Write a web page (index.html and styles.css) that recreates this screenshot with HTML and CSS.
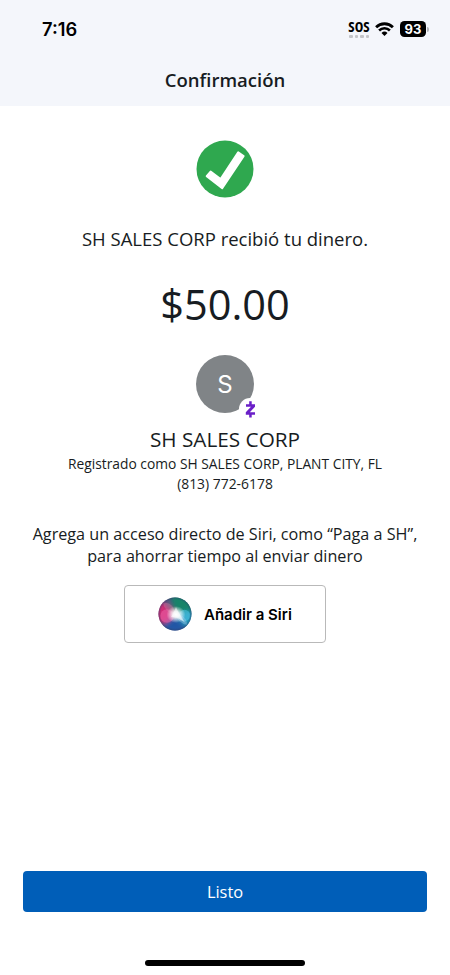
FILE: index.html
```html
<!DOCTYPE html>
<html lang="es">
<head>
<meta charset="utf-8">
<meta name="viewport" content="width=device-width, initial-scale=1">
<title>Confirmación</title>
<link rel="stylesheet" href="styles.css">
</head>
<body>
<div class="screen">
  <header class="header">
    <div class="status">
      <span class="time">7:16</span>
      <div class="indicators">
        <div class="sos"><span class="sos-text">SOS</span><span class="dots"><i></i><i></i><i></i><i></i></span></div>
        <svg class="wifi" viewBox="0 0 19 14" width="19" height="14">
          <path d="M1.1 5.2a12 12 0 0 1 16.8 0" fill="none" stroke="#000" stroke-width="2.8"/>
          <path d="M4.1 8.5a7.7 7.7 0 0 1 10.8 0" fill="none" stroke="#000" stroke-width="2.6"/>
          <path d="M6.5 11a4.3 4.3 0 0 1 6 0L9.5 14z"/>
        </svg>
        <div class="battery"><span class="level">93</span><span class="cap"></span></div>
      </div>
    </div>
    <h1 class="title">Confirmación</h1>
  </header>
  <main class="content">
    <svg class="check" viewBox="0 0 58 58" width="58" height="58">
      <circle cx="29" cy="29" r="28.5" fill="#2fa84f"/>
      <path d="M10.7 36.2L14.6 31.6L24.6 39L42.2 12.4L47.6 16.1L26.2 48.1z" fill="#fff" stroke="#fff" stroke-width="2" stroke-linejoin="round"/>
    </svg>
    <p class="message">SH SALES CORP recibió tu dinero.</p>
    <p class="amount">$50.00</p>
    <div class="avatar">
      <span class="initial">S</span>
      <span class="badge">
        <svg viewBox="0 0 20 20" width="20" height="20">
          <path d="M6 5.2H15V7.8L9.8 13.2H15V15.8H5.8V13.2L11 7.8H6zM9.2 2.2h2.5v3.2H9.2zM9.2 15.4h2.5v3.2H9.2z" fill="#6a1fc8"/>
        </svg>
      </span>
    </div>
    <h2 class="name">SH SALES CORP</h2>
    <p class="detail registered">Registrado como SH SALES CORP, PLANT CITY, FL</p>
    <p class="detail phone">(813) 772-6178</p>
    <p class="hint">Agrega un acceso directo de Siri, como “Paga a SH”,<br>para ahorrar tiempo al enviar dinero</p>
    <button class="siri">
      <svg class="orb" viewBox="0 0 34 34" width="34" height="34">
        <defs>
          <clipPath id="disc"><circle cx="17" cy="17" r="16.5"/></clipPath>
          <filter id="soft" x="-50%" y="-50%" width="200%" height="200%"><feGaussianBlur stdDeviation="2.6"/></filter>
          <radialGradient id="glow"><stop offset="0" stop-color="#fff"/><stop offset=".35" stop-color="#fff" stop-opacity=".85"/><stop offset="1" stop-color="#fff" stop-opacity="0"/></radialGradient>
          <radialGradient id="rim"><stop offset=".86" stop-color="#26406b" stop-opacity="0"/><stop offset="1" stop-color="#26406b" stop-opacity=".45"/></radialGradient>
        </defs>
        <g clip-path="url(#disc)">
          <rect width="34" height="34" fill="#50547f"/>
          <g filter="url(#soft)">
            <path d="M17 17L-2 -2V28L9 25z" fill="#d02c75"/>
            <path d="M17 17L12 -3H36V17z" fill="#128469"/>
            <path d="M17 17L36 13V31L26 30z" fill="#2499b8"/>
            <path d="M17 17L29 32L17 37L3 31z" fill="#2357a5"/>
          </g>
          <circle cx="9" cy="19" r="6.8" fill="#ed6aae" opacity=".5"/>
          <circle cx="26.5" cy="18.5" r="5.7" fill="#54c9ed" opacity=".5"/>
          <path d="M5 6Q15 4 17 17Q7 16 5 6z" fill="#d985a6" opacity=".35"/>
          <path d="M17 17Q29 18 29 28Q20 26 17 17z" fill="#bbcff3" opacity=".35"/>
          <ellipse cx="18" cy="17.5" rx="9.5" ry="8.5" fill="url(#glow)"/>
          <path d="M15 17L18 10L20.5 15.5L27 25.5L19 20.5L13 20z" fill="#fff" opacity=".5"/>
          <circle cx="17" cy="17" r="16.5" fill="url(#rim)"/>
        </g>
      </svg>
      <span class="siri-label">Añadir a Siri</span>
    </button>
  </main>
  <footer class="footer">
    <button class="done">Listo</button>
    <div class="home"></div>
  </footer>
</div>
</body>
</html>
```

FILE: styles.css
```css
* { box-sizing: border-box; }
body { margin: 0; background: #fff; color: #171c22; font-family: "Open Sans", sans-serif; }
h1, h2, p { margin: 0; font-weight: 400; white-space: nowrap; }
button { font: inherit; padding: 0; border: 0; }
.screen { width: 450px; height: 975px; display: flex; flex-direction: column; overflow: hidden; }
.header { height: 106px; background: #f4f6fb; display: flex; flex-direction: column; align-items: center; }
.status { width: 100%; height: 58px; padding: 0 21px 0 42px; display: flex; justify-content: space-between; align-items: center; color: #000; }
.time { font: 600 18.3px/24px Inter, sans-serif; }
.indicators { display: flex; align-items: center; }
.sos { width: 22px; margin-right: 5px; display: flex; flex-direction: column; align-items: center; }
.sos-text { font: 700 14.5px/14px "Open Sans", sans-serif; font-stretch: 75%; }
.dots { display: flex; gap: 2px; margin-top: 1px; }
.dots i { width: 3.5px; height: 3.5px; border-radius: 1px; background: #c3c4c8; }
.wifi { display: block; margin-right: 6px; }
.battery { display: flex; align-items: center; gap: 1px; }
.level { width: 26px; height: 16px; border-radius: 4.5px; background: #000; color: #fff; font: 700 13px/16px Inter, sans-serif; text-align: center; }
.cap { width: 2px; height: 5px; border-radius: 0 2px 2px 0; background: #b4b5b9; }
.title { font-size: 18.5px; font-weight: 550; line-height: 44px; }
.content { flex: 1; display: flex; flex-direction: column; align-items: center; padding-top: 34px; }
.check { display: block; }
.message { margin-top: 27px; font-size: 18.5px; line-height: 28px; }
.amount { margin-top: 21px; font-size: 41.5px; line-height: 60px; }
.avatar { position: relative; width: 58px; height: 58px; margin-top: 21px; border-radius: 50%; background: #808487; display: flex; align-items: center; justify-content: center; }
.initial { padding-top: 2px; color: #fff; font: 400 24px/30px Inter, sans-serif; }
.badge { position: absolute; left: 43px; top: 43px; width: 22px; height: 22px; border-radius: 50%; background: #fff; display: flex; align-items: center; justify-content: center; }
.name { margin-top: 11px; font-size: 20.75px; line-height: 30px; }
.detail { font-size: 13.8px; line-height: 20px; }
.phone { font-size: 13.9px; }
.hint { margin-top: 29px; font-size: 16.18px; line-height: 22px; text-align: center; }
.siri { width: 202px; height: 58px; margin-top: 18px; border: 1.5px solid #b9b9b9; border-radius: 4px; background: #fff; display: flex; align-items: center; padding-left: 33px; gap: 12px; color: #000; }
.siri-label { padding-top: 2px; font: 600 15px/20px Inter, sans-serif; white-space: nowrap; }
.footer { height: 104px; display: flex; flex-direction: column; align-items: center; }
.done { width: 404px; height: 41px; padding-top: 1px; border-radius: 4px; background: #005eb8; color: #fff; font-size: 16.4px; font-weight: 500; line-height: 40px; }
.home { width: 160px; height: 6px; margin-top: 48px; border-radius: 3px; background: #000; }
```
